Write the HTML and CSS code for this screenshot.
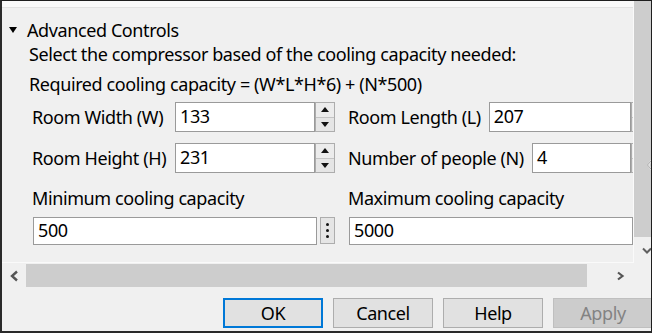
FILE: index.html
```html
<!DOCTYPE html>
<html lang="en">

<head>
    <meta charset="UTF-8">
    <title>Advanced Controls</title>
    <link rel="stylesheet" href="styles.css">
</head>

<body>
    <div class="dialog">
        <div class="main">
            <div class="viewport">
                <div class="prev"></div>
                <div class="group">
                    <div class="group-head"><span class="caret"></span>Advanced Controls</div>
                    <p class="line">Select the compressor based of the cooling capacity needed:</p>
                    <p class="line formula">Required cooling capacity = (W*L*H*6) + (N*500)</p>

                    <div class="fields">
                        <div class="field">
                            <span class="lbl lbl-left">Room Width (W)</span>
                            <div class="box">133</div>
                            <div class="spin"><span class="up"></span><span class="down"></span></div>
                        </div>
                        <div class="field">
                            <span class="lbl">Room Length (L)</span>
                            <div class="box">207</div>
                            <div class="spin"><span class="up"></span><span class="down"></span></div>
                        </div>
                        <div class="field">
                            <span class="lbl lbl-left">Room Height (H)</span>
                            <div class="box">231</div>
                            <div class="spin"><span class="up"></span><span class="down"></span></div>
                        </div>
                        <div class="field">
                            <span class="lbl">Number of people (N)</span>
                            <div class="box">4</div>
                            <div class="spin"><span class="up"></span><span class="down"></span></div>
                        </div>
                    </div>

                    <div class="caps">
                        <div class="cap">
                            <span class="lbl">Minimum cooling capacity</span>
                            <div class="cap-row">
                                <div class="box">500</div>
                                <div class="dots"><i></i><i></i><i></i></div>
                            </div>
                        </div>
                        <div class="cap">
                            <span class="lbl">Maximum cooling capacity</span>
                            <div class="cap-row">
                                <div class="box">5000</div>
                                <div class="dots"><i></i><i></i><i></i></div>
                            </div>
                        </div>
                    </div>
                </div>
            </div>
            <div class="vscroll">
                <div class="vthumb"></div>
                <svg class="grip" width="6" height="12" viewBox="0 0 6 12"><path d="M5 1 L1 6 L5 11" fill="none" stroke="#ffffff" stroke-width="1.5"/><path d="M6 0 L0.5 6 L6 12" fill="none" stroke="#9a9a9a" stroke-width="1"/></svg>
                <svg class="varrow" width="10" height="7" viewBox="0 0 10 7"><path d="M1 1.5 L5 5.5 L9 1.5" fill="none" stroke="#606060" stroke-width="2"/></svg>
            </div>
        </div>

        <div class="bottom">
            <div class="hscroll">
                <div class="harrow">
                    <svg width="10" height="12" viewBox="0 0 10 12"><path d="M8 1.5 L3 6 L8 10.5" fill="none" stroke="#555" stroke-width="2.4"/></svg>
                </div>
                <div class="hthumb"></div>
                <div class="harrow harrow-right">
                    <svg width="9" height="10" viewBox="0 0 9 10"><path d="M2 1.5 L6.5 5 L2 8.5" fill="none" stroke="#555" stroke-width="2.2"/></svg>
                </div>
            </div>
            <div class="corner"></div>
        </div>

        <div class="buttons">
            <button class="btn btn-default">OK</button>
            <button class="btn">Cancel</button>
            <button class="btn">Help</button>
            <button class="btn" disabled>Apply</button>
        </div>
    </div>
</body>

</html>
```

FILE: styles.css
```css
* {
    margin: 0;
    padding: 0;
    box-sizing: border-box;
}

body {
    font-family: "Noto Sans", "Open Sans", sans-serif;
    font-size: 18px;
    letter-spacing: -0.4px;
    color: #000;
    background-color: #f0f0f0;
    width: 652px;
    height: 333px;
    overflow: hidden;
}

.dialog {
    width: 652px;
    height: 333px;
    border: 1px solid #1e1e1e;
    border-left: 2px solid #2a2a2a;
    border-bottom: 2px solid #2a2a2a;
    background-color: #f0f0f0;
    overflow: hidden;
    display: flex;
    flex-direction: column;
}

.main {
    display: flex;
    height: 262px;
}

.viewport {
    width: 632px;
    height: 262px;
    overflow: hidden;
    border-right: 1px solid #fafafa;
    border-bottom: 1px solid #fafafa;
}

.prev {
    height: 7px;
    background-color: #f9f9f9;
    border-bottom: 1px solid #e2e2e2;
}

.group {
    width: 700px;
    padding-left: 7px;
}

.group-head {
    display: flex;
    align-items: center;
    height: 24px;
    margin-top: 10px;
    line-height: 24px;
}

.caret {
    width: 0;
    height: 0;
    border-left: 4.5px solid transparent;
    border-right: 4.5px solid transparent;
    border-top: 6px solid #000;
    margin-right: 10px;
}

.line {
    height: 24px;
    line-height: 24px;
    padding-left: 20px;
}

.formula {
    margin-top: 6px;
}

.fields {
    display: grid;
    grid-template-columns: 303px 303px;
    column-gap: 13px;
    row-gap: 11px;
    margin-top: 6px;
    padding-left: 23px;
}

.field {
    display: flex;
    align-items: stretch;
    height: 30px;
}

.lbl {
    line-height: 30px;
    white-space: nowrap;
    margin-right: 8px;
}

.lbl-left {
    width: 143px;
    margin-right: 0;
}

.box {
    flex: 1;
    background-color: #fff;
    border: 1px solid #9a9a9a;
    padding-left: 4px;
    line-height: 27px;
    white-space: nowrap;
    overflow: hidden;
}

.spin {
    width: 20px;
    display: flex;
    flex-direction: column;
    border: 1px solid #adadad;
    background-color: #e5e5e5;
}

.spin span {
    flex: 1;
    display: flex;
    align-items: center;
    justify-content: center;
}

.spin .up {
    border-bottom: 1px solid #c4c4c4;
    background-color: #ececec;
}

.spin .up::after {
    content: "";
    border-left: 4px solid transparent;
    border-right: 4px solid transparent;
    border-bottom: 5px solid #111;
}

.spin .down::after {
    content: "";
    border-left: 4px solid transparent;
    border-right: 4px solid transparent;
    border-top: 5px solid #111;
}

.caps {
    display: grid;
    grid-template-columns: 303px 303px;
    column-gap: 13px;
    margin-top: 13px;
    padding-left: 23px;
}

.cap .lbl {
    display: block;
    line-height: 24px;
}

.cap-row {
    display: flex;
    gap: 3px;
    height: 28px;
    margin-top: 7px;
    padding-left: 1px;
}

.cap-row .box {
    flex: none;
    width: 284px;
    line-height: 25px;
}

.dots {
    width: 15px;
    height: 27px;
    border: 1px solid #adadad;
    background-color: #e5e5e5;
    display: flex;
    flex-direction: column;
    align-items: center;
    justify-content: center;
    gap: 3px;
}

.dots i {
    width: 3px;
    height: 3px;
    background-color: #111;
    border-radius: 50%;
}

.vscroll {
    width: 17px;
    height: 262px;
    position: relative;
    overflow: hidden;
}

.vthumb {
    height: 236px;
    background-color: #cdcdcd;
}

.grip {
    position: absolute;
    left: 13px;
    top: 158px;
}

.varrow {
    position: absolute;
    left: 8px;
    top: 246px;
}

.bottom {
    display: flex;
    height: 25px;
}

.hscroll {
    width: 632px;
    display: flex;
    align-items: center;
}

.harrow {
    width: 24px;
    height: 23px;
    display: flex;
    align-items: center;
    justify-content: center;
}

.harrow-right {
    margin-left: auto;
    width: 46px;
    justify-content: flex-start;
    padding-left: 28px;
}

.hthumb {
    width: 561px;
    height: 23px;
    background-color: #cdcdcd;
}

.corner {
    width: 17px;
}

.buttons {
    display: flex;
    gap: 10px;
    padding-left: 221px;
    margin-top: 10px;
}

.btn {
    flex: none;
    width: 100px;
    height: 30px;
    font-family: "Noto Sans", "Open Sans", sans-serif;
    font-size: 18px;
    letter-spacing: -0.4px;
    color: #000;
    background-color: #e1e1e1;
    border: 1px solid #adadad;
}

.btn-default {
    border: 2px solid #0078d7;
}

.btn:disabled {
    color: #838383;
    background-color: #cccccc;
    border-color: #bfbfbf;
}
```
